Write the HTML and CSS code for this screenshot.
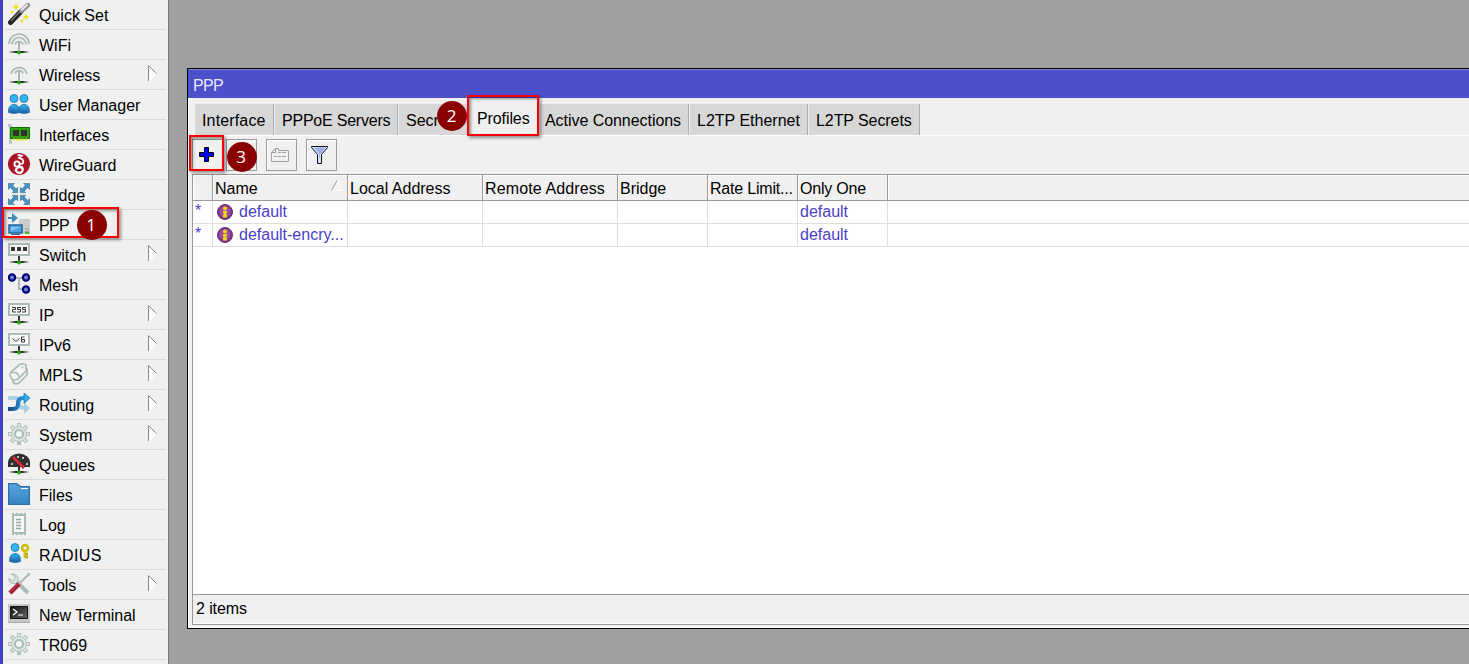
FILE: index.html
```html
<!DOCTYPE html>
<html lang="en">
<head>
<meta charset="utf-8">
<title>PPP</title>
<link rel="stylesheet" href="styles.css">
</head>
<body>
<svg class="defs" aria-hidden="true">
  <defs>
    <linearGradient id="blue" x1="0" y1="0" x2="0" y2="1"><stop offset="0" stop-color="#35b5f5"/><stop offset="1" stop-color="#1b5c9e"/></linearGradient>
    <linearGradient id="folder" x1="0" y1="0" x2="0" y2="1"><stop offset="0" stop-color="#5aa3dc"/><stop offset="1" stop-color="#3585c4"/></linearGradient>
    <linearGradient id="foot"><stop offset="0" stop-color="#333" stop-opacity=".1"/><stop offset=".35" stop-color="#222"/><stop offset=".65" stop-color="#222"/><stop offset="1" stop-color="#333" stop-opacity=".1"/></linearGradient>
    <linearGradient id="term" x1="0" y1="0" x2="1" y2="1"><stop offset="0" stop-color="#111"/><stop offset="1" stop-color="#666"/></linearGradient>
    <linearGradient id="flow" gradientUnits="userSpaceOnUse" x1="0" y1="0" x2="20" y2="0"><stop offset="0" stop-color="#17467c"/><stop offset="1" stop-color="#2db4f4"/></linearGradient>
    <radialGradient id="orb"><stop offset="0" stop-color="#8798d8"/><stop offset=".45" stop-color="#5468b8"/><stop offset=".55" stop-color="#000080"/><stop offset="1" stop-color="#000070"/></radialGradient>
    <g id="base"><path d="M11 13v6" stroke="#333" stroke-width="2"/><path d="M1 18h20v2H1z" fill="url(#foot)"/><circle cx="11" cy="19.500" r="2" fill="#1db000"/></g>
    <g id="person"><circle cx="6" cy="4.500" r="4" fill="#33b5f3" stroke="#236fa5" stroke-width=".8"/><path d="M.6 18.500C.2 13 2.500 10.500 6 10.500s5.800 2.500 5.400 8Q6 20.500.6 18.500z" fill="url(#blue)" stroke="#236fa5" stroke-width=".8"/></g>
    <g id="gear">
      <g stroke="#b1c0bd" stroke-width="4"><path d="M11 0v22M0 11h22M3.200 3.200l15.600 15.600M18.800 3.200L3.200 18.800"/></g>
      <g stroke="#e4e9e8" stroke-width="1.800"><path d="M11 1v10M1 11h20M4 4l14 14M18 4L4 18"/></g>
      <circle cx="11" cy="11" r="7.500" fill="#dfe5e4" stroke="#b6c4c1"/><circle cx="11" cy="11" r="4" fill="#f4f4f4" stroke="#a9bab7" stroke-width="2"/>
    </g>
    <g id="info"><circle cx="8" cy="8" r="7.500" fill="#83338f" stroke="#643270"/><circle cx="8" cy="7.500" r="5.500" fill="#a04bab"/><path d="M6 7h4v2h-.5v2h.5v2.500H6V11h.5V9H6z" fill="#eadc00"/><circle cx="8" cy="4.400" r="2" fill="#eadc00"/></g>
    <g id="more"><path d="M.5.500l8 8-8 8z" fill="#fbfbfb"/><path d="M8.500 8.500l-7 7.500" stroke="#fff"/><path d="M.5 16V.5l8 8" fill="none" stroke="#8a8a8a"/></g>
  </defs>
</svg>
<div class="desktop">
  <nav class="menu">
    <div class="item"><svg class="icon" viewBox="0 0 22 22"><path d="M2.500 19.500L13 8.500" stroke="#232323" stroke-width="5" stroke-linecap="round"/><path d="M3 18l9-9.500" stroke="#777" stroke-width="1.200"/><path d="M13.500 8L20 2" stroke="#919191" stroke-width="4.500" stroke-linecap="round"/><path d="M13 7.500l6.500-6" stroke="#e4e4e4" stroke-width="2.200"/><path d="M8 0l1 3 3 .8-3 1.200-1 3-1-3-3-1.200L7 3zM18 10.500l1 2.500 2.600 1-2.600 1-1 2.500-1-2.500-2.600-1 2.600-1zM4 7l.7 1.300L6 9l-1.300.7L4 11l-.7-1.300L2 9l1.300-.7zM14 16l.7 1.300 1.300.7-1.300.7L14 20l-.7-1.300L12 18l1.300-.7z" fill="#e8e10e"/></svg><span>Quick Set</span></div>
    <div class="item"><svg class="icon" viewBox="0 0 22 22"><g fill="none" stroke="#acbab8" stroke-width="1.700"><path d="M1 11A10 10 0 0 1 21 11"/><path d="M4 11.500A7 7 0 0 1 18 11.500"/><path d="M7 11.500A4.200 4.200 0 0 1 15 11.500"/></g><use href="#base"/><path d="M11 9v9" stroke="#a9b8b6" stroke-width="2"/></svg><span>WiFi</span></div>
    <div class="item"><svg class="icon" viewBox="0 0 22 22"><g fill="none" stroke="#acbab8" stroke-width="1.900"><path d="M3 11A8.200 8.200 0 0 1 19 11"/><path d="M7 10.500A4.200 4.200 0 0 1 15 10.500"/></g><use href="#base"/><path d="M11 8v10" stroke="#a9b8b6" stroke-width="2"/></svg><span>Wireless</span><svg class="arrow"><use href="#more"/></svg></div>
    <div class="item"><svg class="icon" viewBox="0 0 22 22"><use href="#person" x="10" y="1"/><use href="#person" y="1"/></svg><span>User Manager</span></div>
    <div class="item"><svg class="icon" viewBox="0 0 22 22"><path d="M0 1h4v20H1V4H0z" fill="#bac8c6"/><path d="M2.500 4.500h19v11h-19z" fill="#2ca20b" stroke="#17690a"/><path d="M5 7h6v6H5zM13 7h6v6h-6z" fill="#333"/><path d="M5 16.500h15" stroke="#d9df15" stroke-width="2" stroke-dasharray="2 1"/></svg><span>Interfaces</span></div>
    <div class="item"><svg class="icon" viewBox="0 0 22 22"><circle cx="11" cy="11" r="11" fill="#a91525"/><g fill="none" stroke="#fff" stroke-linecap="round"><path d="M10.500 2l3 .8-2.500 2 3.500 1.700c2 2.500.5 4.500-2.500 4.500" stroke-width="1.900"/><circle cx="9" cy="11" r="2.600" stroke-width="1.900"/><path d="M7.500 18c0-4 7-5 7-1.500 0 4-6 4-6 .5M9 19.500c3 1.500 6 0 6-3 0-3-2-3-3-3" stroke-width="1.700"/></g></svg><span>WireGuard</span></div>
    <div class="item"><svg class="icon" viewBox="0 0 22 22"><g fill="#4295c9" stroke="#36617f" stroke-width=".6"><path id="corner" d="M.4.400h6L4.500 2.300l3.700 3.700 1.400-1.700v5.300H4.300L6 8.200 2.300 4.500.4 6.400z"/><use href="#corner" transform="matrix(-1 0 0 1 22 0)"/><use href="#corner" transform="matrix(1 0 0 -1 0 22)"/><use href="#corner" transform="rotate(180 11 11)"/></g></svg><span>Bridge</span></div>
    <div class="item"><svg class="icon" viewBox="0 0 22 22"><path d="M11 6h11v15H11z" fill="#cbcbcb"/><path d="M17 16h4M17 18.500h4" stroke="#999"/><path d="M17 20h4" stroke="#10b000" stroke-width="1.500"/><path d="M0 4h4V0l6 5-6 5V6H0z" fill="#438ab5"/><path d="M1 12h13v8H1z" fill="#4ba1e1" stroke="#23679d" stroke-width="1.500"/><path d="M3 14h9l-9 4z" fill="#8dc8f2"/><path d="M3 21.500h9" stroke="#34658b"/></svg><span class="tight">PPP</span></div>
    <div class="item"><svg class="icon" viewBox="0 0 22 22"><use href="#base"/><path d="M1 1h20v11H1z" fill="#fafafa" stroke="#a9bab7" stroke-width="2"/><path d="M3 4h4v4H3zM9 4h4v4H9zM15 4h4v4h-4z" fill="#333"/></svg><span>Switch</span><svg class="arrow"><use href="#more"/></svg></div>
    <div class="item"><svg class="icon" viewBox="0 0 22 22"><path d="M4 5h14M11 5v11h7" fill="none" stroke="#abbab7" stroke-width="2"/><g fill="url(#orb)"><circle cx="4" cy="4.500" r="4.200"/><circle cx="18" cy="4.500" r="4.200"/><circle cx="18" cy="16.500" r="4.200"/></g></svg><span>Mesh</span></div>
    <div class="item"><svg class="icon" viewBox="0 0 22 22"><use href="#base"/><path d="M1 1h20v11H1z" fill="#fafafa" stroke="#a9bab7" stroke-width="2"/><path d="M4 4.500h3.500v2H4.500v2.500H8M13 4.500H9.500v2h3V9H9M18 4.500h-3.500v2h3V9H14" fill="none" stroke="#333"/></svg><span>IP</span><svg class="arrow"><use href="#more"/></svg></div>
    <div class="item"><svg class="icon" viewBox="0 0 22 22"><use href="#base"/><path d="M1 1h20v11H1z" fill="#fafafa" stroke="#a9bab7" stroke-width="2"/><path d="M4.500 5.500l3.500 3 3.500-3M16.500 4H13.500v5h3V6.500h-3" fill="none" stroke="#333"/></svg><span>IPv6</span><svg class="arrow"><use href="#more"/></svg></div>
    <div class="item"><svg class="icon" viewBox="0 0 22 22"><path d="M5 16v-3l7-7q4-2 7 0v6l-8 8q-4 2-6-1z" fill="#f2f2f2" stroke="#aabab7" stroke-width="1.700"/><path d="M3 9l8-7q2-1.500 4.500-1L18 2v6l-8 8q-3 2-6 0-3-3-1-7z" fill="#f6f6f6" stroke="#aabab7" stroke-width="1.700"/><path d="M4 10q6-2 7 4" fill="none" stroke="#aabab7" stroke-width="1.500"/><circle cx="14.500" cy="4.500" r="1" fill="#aabab7"/></svg><span>MPLS</span><svg class="arrow"><use href="#more"/></svg></div>
    <div class="item"><svg class="icon" viewBox="0 0 22 22"><path d="M0 5h7q4 0 4 5 0 5 5 5h1" fill="none" stroke="#a9cfe8" stroke-width="4"/><path d="M16 9.500l6 5.500-6 6z" fill="#a9cfe8"/><path d="M0 16h5q5 0 5-5 0-6 5-6h2" fill="none" stroke="url(#flow)" stroke-width="4"/><path d="M16 0l6 5-6 5.500z" fill="#2ab5f4" stroke="#286b9a" stroke-width=".7"/></svg><span>Routing</span><svg class="arrow"><use href="#more"/></svg></div>
    <div class="item"><svg class="icon" viewBox="0 0 22 22"><use href="#gear"/></svg><span>System</span><svg class="arrow"><use href="#more"/></svg></div>
    <div class="item"><svg class="icon" viewBox="0 0 22 22"><use href="#base"/><path d="M0 14v-4A11 9.500 0 0 1 22 10v4z" fill="#303030"/><path d="M3 10h2v2H3zM9 3h2v2H9zM14 4h2v2h-2zM18 10h2v2h-2z" fill="#bbb"/><path d="M5 4l11 11" stroke="#d12a38" stroke-width="3"/></svg><span>Queues</span></div>
    <div class="item"><svg class="icon" viewBox="0 0 22 22"><path d="M.6.600h8l4 3h8.800v17.800H.6z" fill="url(#folder)" stroke="#2b6fa8" stroke-width="1.200"/><path d="M13 5.500h7" stroke="#fff"/></svg><span>Files</span></div>
    <div class="item"><svg class="icon" viewBox="0 0 22 22"><path d="M5 2h12v18H5z" fill="#f7f7f7" stroke="#a9bab7" stroke-width="2"/><path d="M4 1h14M4 21h14" stroke="#a9bab7" stroke-width="2" stroke-dasharray="2 2"/><path d="M8 6.500h6M8 9.500h6M8 12.500h6M8 15.500h6" stroke="#94a8a5" stroke-width="1.300" stroke-dasharray="5 1"/></svg><span>Log</span></div>
    <div class="item"><svg class="icon" viewBox="0 0 22 22"><path d="M17 7v8M17 11h3M17 14h3" fill="none" stroke="#afa816" stroke-width="2.600"/><circle cx="17" cy="5" r="3" fill="#eee" stroke="#c8bd00" stroke-width="2.500"/><path d="M17 8v7" stroke="#e7df13"/><use href="#person" x="1"/></svg><span class="wide">RADIUS</span></div>
    <div class="item"><svg class="icon" viewBox="0 0 22 22"><path d="M7 7l13 13" stroke="#abbab7" stroke-width="4"/><path d="M3 1l4 2v3L4 8 1 5q-1 3 2 5 5 2 7-2 1-6-5-7z" fill="#dbe2e0" stroke="#a9bab7"/><path d="M10 12L21 1" stroke="#aabab7" stroke-width="2"/><path d="M19 0h3v3z" fill="#aabab7"/><path d="M2 20l9-9" stroke="#a1192c" stroke-width="4.500"/><path d="M2 19l8-8" stroke="#d03e52" stroke-width="1"/></svg><span>Tools</span><svg class="arrow"><use href="#more"/></svg></div>
    <div class="item"><svg class="icon" viewBox="0 0 22 22"><path d="M0 1h22v19H0z" fill="#c7c7c7"/><path d="M2.500 3.500h17v12h-17z" fill="url(#term)" stroke="#111"/><path d="M5 6l4 3L5 12M10 12h5" fill="none" stroke="#fff" stroke-width="1.200"/><path d="M0 19.500h22" stroke="#aaa"/></svg><span>New Terminal</span></div>
    <div class="item"><svg class="icon" viewBox="0 0 22 22"><use href="#gear"/></svg><span>TR069</span></div>
  </nav>
  <main class="workspace">
    <section class="window">
      <header class="title">PPP</header>
      <div class="tabs">
        <div class="tab t-interface">Interface</div><div class="tab t-pppoe">PPPoE Servers</div><div class="tab t-secrets">Secrets</div><div class="tab active">Profiles</div><div class="tab t-connections">Active Connections</div><div class="tab t-ethernet">L2TP Ethernet</div><div class="tab t-l2tp">L2TP Secrets</div>
      </div>
      <div class="toolbar">
        <button class="tool add"><svg width="16" height="16" viewBox="0 0 16 16"><path d="M5.500.500h4v5h5v4h-5v5h-4v-5h-5v-4h5z" fill="#0000ff" stroke="#000"/></svg></button>
        <button class="tool remove"></button>
        <button class="tool card"><svg width="18" height="15" viewBox="0 0 18 15"><path d="M.5 13.500v-9l4-4h3v2h10v11zM.5 4.500h4v-4M7 4.500h3m1 0h4M3 8.500h3m1 0h3m1 0h4" fill="none" stroke="#a0a0a0"/></svg></button>
        <button class="tool filter"><svg width="18" height="19" viewBox="0 0 18 19"><path d="M.5.500h16v1l-6 7v9h-4v-9l-6-7z" fill="#d8e2fb" stroke="#111"/><path d="M3 1.500h12l-6 7v3H8V8z" fill="#9fb2e5"/></svg></button>
      </div>
      <div class="table">
        <div class="row head"><div></div><div class="sorted">Name<svg width="13" height="12"><path d="M1 10.500h10.500L7 1" fill="#f5f5f5" stroke="#fff"/><path d="M.5 10.500L6 .5" stroke="#999"/></svg></div><div>Local Address</div><div class="spaced">Remote Address</div><div>Bridge</div><div class="narrow">Rate Limit...</div><div class="narrow">Only One</div><div></div></div>
        <div class="row"><div class="flag">*</div><div class="name"><svg width="16" height="16"><use href="#info"/></svg>default</div><div></div><div></div><div></div><div></div><div>default</div><div></div></div>
        <div class="row"><div class="flag">*</div><div class="name"><svg width="16" height="16"><use href="#info"/></svg>default-encry...</div><div></div><div></div><div></div><div></div><div>default</div><div></div></div>
      </div>
      <footer class="status">2 items</footer>
    </section>
  </main>
  <div class="mark mark-ppp"></div><div class="step step-one">1</div>
  <div class="mark mark-profiles"></div><div class="step step-two">2</div>
  <div class="mark mark-add"></div><div class="step step-three">3</div>
</div>
</body>
</html>
```

FILE: styles.css
```css
* { box-sizing: border-box; }
body { margin: 0; overflow: hidden; font: 16px/20px "Liberation Sans", Arial, sans-serif; color: #000; }
svg { display: block; flex: none; }
.defs { position: absolute; width: 0; height: 0; }
.desktop { position: relative; display: flex; height: 664px; background: #a0a0a0; }

.menu { width: 169px; padding: 0 2px; overflow: hidden; background: #f0f0f0; border-left: 3px solid #4440c4; border-right: 1px solid #787878; }
.item { display: flex; align-items: flex-start; height: 30px; padding: 3px 8px 0 3px; border-bottom: 1px solid #dadada; }
.icon { width: 22px; height: 22px; margin-right: 9px; }
.item span { flex: 1; padding-top: 3px; white-space: nowrap; }
.item .tight { letter-spacing: -.7px; }
.item .wide { letter-spacing: .4px; }
.arrow { width: 10px; height: 17px; margin-top: 2px; }

.workspace { flex: 1; min-width: 0; padding: 68px 0 35px 18px; }
.window { display: flex; flex-direction: column; height: 561px; padding: 0 0 3px 4px; background: #f0f0f0; border: solid #000; border-width: 1px 0 1px 1px; box-shadow: inset 1px -1px #fff; }
.title { height: 29px; margin-left: -4px; padding: 6px 5px 0; color: #e8e8fa; background: #4e4fcb; border-top: 1px solid #8080d0; letter-spacing: -.7px; }

.tabs { display: flex; height: 38px; margin-left: -3px; padding: 6px 0 0 5px; border-bottom: 1px solid #fff; }
.tab { height: 31px; padding: 7px 0 0 7px; background: #d7d7d7; border-right: 1px solid #acacac; border-left: 1px solid #f0f0f0; white-space: nowrap; overflow: hidden; }
.t-interface { width: 80px; letter-spacing: .15px; }
.t-pppoe { width: 124px; letter-spacing: -.22px; }
.t-secrets { width: 70px; }
.active { width: 71px; height: 35px; margin-top: -4px; padding: 9px 0 0 9px; letter-spacing: -.1px; background: #f0f0f0; border: 0; }
.t-connections { width: 150px; padding-left: 5px; letter-spacing: -.05px; }
.t-ethernet { width: 119px; }
.t-l2tp { width: 112px; letter-spacing: -.08px; }

.toolbar { display: flex; gap: 9px; height: 38px; padding-top: 3px; }
.tool { display: grid; place-items: center; width: 31px; height: 32px; padding: 0; background: #f0f0f0; border: 1px solid #9b9b9b; box-shadow: inset 1px 1px #fff; }
.add { padding-right: 1px; }
.remove { margin-left: -6px; }
.card, .filter { padding-right: 3px; }

.table { flex: 1; background: #fff; border: 1px solid #999; border-right: 0; }
.row { display: grid; grid-template-columns: 20px 135px 135px 135px 90px 90px 90px 1fr; height: 23px; color: #4a3fc8; }
.row > div { padding: 1px 0 0 2px; overflow: hidden; white-space: nowrap; border-right: 1px solid #dedede; border-bottom: 1px solid #dedede; }
.row > div:last-child { border-right: 0; }
.row.head { height: 26px; color: #000; background: #f0f0f0; }
.row.head > div { padding-top: 4px; border-color: #999; box-shadow: inset 1px 1px #fff; }
.row .sorted { display: flex; justify-content: space-between; padding-right: 3px; }
.sorted svg { margin-top: 1px; }
.spaced { letter-spacing: .12px; }
.narrow { letter-spacing: -.2px; }
.row .name { display: flex; gap: 6px; }
.name svg { margin: 2px 0 0 2px; }
.row .flag { padding-top: 0; font-size: 16px; }
.status { height: 30px; padding: 4px 3px; border-left: 1px solid #999; border-bottom: 1px solid #999; box-shadow: inset 0 -1px #fff; letter-spacing: -.1px; }

.mark { position: absolute; border: 2px solid #f00; box-shadow: 2px 2px 3px #0006, inset 2px 2px 3px #0006; }
.mark-ppp { left: 2px; top: 207px; width: 117px; height: 31px; }
.mark-profiles { left: 467px; top: 95px; width: 72px; height: 41px; }
.mark-add { left: 189px; top: 135px; width: 35px; height: 36px; }
.step { position: absolute; width: 30px; height: 30px; border-radius: 50%; background: #8b0000; color: #fff; font: 17px/30px "Open Sans", sans-serif; text-align: center; }
.step-one { left: 77px; top: 210px; padding-right: 2px; line-height: 29px; }
.step-two { left: 437px; top: 101px; padding-right: 1px; }
.step-three { left: 227px; top: 142px; padding-right: 2px; line-height: 29px; }
```
